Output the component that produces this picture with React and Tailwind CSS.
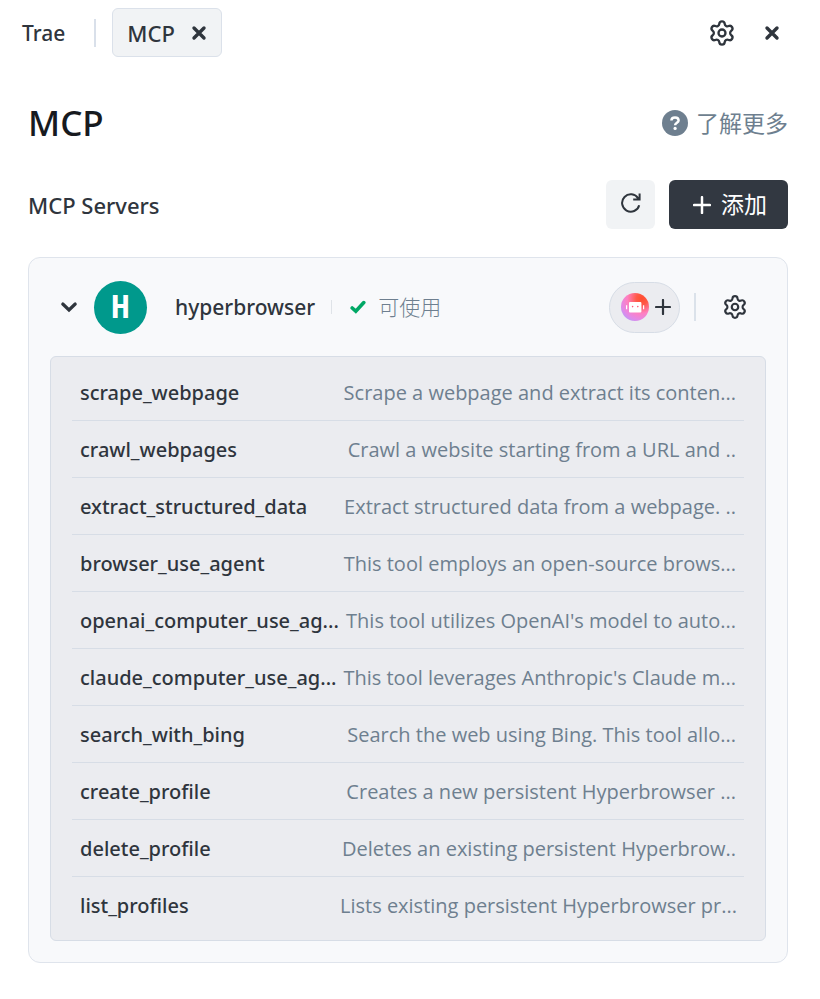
import React from "react";
import { Settings } from "lucide-react";

const tools = [
  ["scrape_webpage", "Scrape a webpage and extract its conten..."],
  ["crawl_webpages", "Crawl a website starting from a URL and .."],
  ["extract_structured_data", "Extract structured data from a webpage. .."],
  ["browser_use_agent", "This tool employs an open-source brows..."],
  ["openai_computer_use_ag...", "This tool utilizes OpenAI's model to auto..."],
  ["claude_computer_use_ag...", "This tool leverages Anthropic's Claude m..."],
  ["search_with_bing", "Search the web using Bing. This tool allo..."],
  ["create_profile", "Creates a new persistent Hyperbrowser ..."],
  ["delete_profile", "Deletes an existing persistent Hyperbrow.."],
  ["list_profiles", "Lists existing persistent Hyperbrowser pr..."],
];

function Cross() {
  return (
    <svg viewBox="0 0 16 16" className="size-4" fill="none" stroke="currentColor" strokeWidth="3.4" strokeLinecap="round">
      <path d="M3 3 13 13M13 3 3 13" />
    </svg>
  );
}

function Plus({ className }) {
  return (
    <svg viewBox="0 0 16 16" className={className} fill="none" stroke="currentColor" strokeWidth="2.2" strokeLinecap="round">
      <path d="M8 1v14M1 8h14" />
    </svg>
  );
}

function Refresh() {
  return (
    <svg viewBox="0 0 20 20" className="mb-1 size-5" fill="none" stroke="currentColor" strokeWidth="2">
      <path d="M18.2 12.2A8.7 8.7 0 1 1 17.2 5.4" />
      <path d="M18.6 0.6v6h-6.4" />
      <path d="M18.6 3v3.6h-3.8z" fill="currentColor" stroke="none" />
    </svg>
  );
}

function Bot() {
  return (
    <svg viewBox="0 0 28 28" className="size-7" aria-hidden="true">
      <defs>
        <radialGradient id="botFill" cx="0.75" cy="0.2" r="0.95">
          <stop offset="0" stopColor="#ff4d2e" />
          <stop offset="0.22" stopColor="#ff5a48" />
          <stop offset="0.55" stopColor="#ff80c0" />
          <stop offset="0.8" stopColor="#e488e6" />
          <stop offset="1" stopColor="#b69bfa" />
        </radialGradient>
      </defs>
      <circle cx="14" cy="14" r="14" fill="url(#botFill)" />
      <rect x="8" y="9" width="12.4" height="10.4" rx="1" fill="#fff" />
      <path d="M5.6 12.2v4M22.6 12.2v4" stroke="#fff" strokeWidth="1.2" />
      <circle cx="11.6" cy="13.6" r="0.8" fill="#ff5b78" />
      <circle cx="16.8" cy="13.6" r="0.8" fill="#ff5b78" />
    </svg>
  );
}

export default function App() {
  return (
    <div className="min-h-screen bg-white font-['Noto_Sans','Noto_Sans_CJK_SC',sans-serif] text-[#2f353d]">
      <header className="flex items-center justify-between pt-2 pr-10 pl-[22px]">
        <div className="flex items-center">
          <span className="text-[21px] leading-7 font-medium">Trae</span>
          <span className="mr-4 ml-[29px] h-7 w-0.5 bg-[#d9e0ea]" />
          <div className="flex h-[49px] items-center gap-4 rounded-md border border-[#dbe1ea] bg-[#f1f3f5] px-[14px]">
            <span className="text-[22px] leading-7 font-medium">MCP</span>
            <button type="button" aria-label="Close tab">
              <Cross />
            </button>
          </div>
        </div>
        <div className="flex items-center gap-7">
          <button type="button" aria-label="Settings">
            <Settings className="size-7" strokeWidth={2} />
          </button>
          <button type="button" aria-label="Close panel">
            <Cross />
          </button>
        </div>
      </header>

      <main className="pt-12 pr-8 pb-9 pl-7">
        <div className="flex items-center justify-between">
          <h1 className="text-[35px] leading-9 font-medium text-[#171a1f]">MCP</h1>
          <a href="#learn" className="flex items-center gap-2 text-[23px] leading-8 text-[#6e7f8f]">
            <svg viewBox="0 0 26 26" className="size-[26px]" fill="none">
              <circle cx="13" cy="13" r="13" fill="#6e7f8f" />
              <path d="M9.4 10.6C9.4 8.6 10.9 7.4 13 7.4s3.6 1.2 3.6 3c0 2.2-3.5 2.4-3.5 4.8" stroke="#fff" strokeWidth="2.5" />
              <circle cx="13.1" cy="18.4" r="1.6" fill="#fff" />
            </svg>
            了解更多
          </a>
        </div>

        <div className="mt-[39px] flex items-center justify-between">
          <h2 className="text-[22px] leading-7 font-medium">MCP Servers</h2>
          <div className="flex gap-3.5">
            <button type="button" aria-label="Refresh" className="flex size-[49px] items-center justify-center rounded-md bg-[#f1f3f5]">
              <Refresh />
            </button>
            <button type="button" className="flex h-[49px] items-center gap-2.5 rounded-md bg-[#323841] pr-[21px] pl-6 text-[23px] text-white">
              <Plus className="size-[18px]" />
              添加
            </button>
          </div>
        </div>

        <section className="mt-7 rounded-xl border border-[#dfe4ec] bg-[#f8f9fb] px-[21px] pb-[21px]">
          <div className="flex h-[98px] items-center justify-between">
            <div className="flex items-center">
              <button type="button" aria-label="Collapse hyperbrowser" className="ml-2.5">
                <svg viewBox="0 0 18 18" className="size-[18px]" fill="none" stroke="currentColor" strokeWidth="3.2" strokeLinecap="round">
                  <path d="M2.8 6 9 12l6.2-6" />
                </svg>
              </button>
              <span className="ml-4 flex size-[53px] items-center justify-center rounded-full bg-[#00998c] font-['DejaVu_Sans_Mono',monospace] text-[32px] leading-8 font-bold text-white">
                H
              </span>
              <span className="ml-7 text-[21px] leading-7 font-medium">hyperbrowser</span>
              <span className="ml-4 h-3.5 w-px bg-[#dfe3e8]" />
              <svg viewBox="0 0 16 14" className="ml-[18px] h-3.5 w-4" fill="none" stroke="#00a865" strokeWidth="3.6" strokeLinecap="round">
                <path d="M2.2 8 5.8 11.2 13.8 2.6" />
              </svg>
              <span className="ml-3 text-[21px] leading-7 font-light text-[#6e7f8f]">可使用</span>
            </div>
            <div className="flex items-center">
              <button type="button" aria-label="Add to agent" className="flex h-[51px] w-[71px] items-center justify-center gap-1.5 rounded-full border border-[#d7dde6] bg-[#ebecf0] pl-[3px]">
                <Bot />
                <Plus className="size-4" />
              </button>
              <span className="ml-3.5 h-7 w-0.5 bg-[#dbe2ea]" />
              <button type="button" aria-label="Server settings" className="mr-[18px] ml-[26px]">
                <Settings className="size-[26px]" strokeWidth={2} />
              </button>
            </div>
          </div>

          <div className="rounded-md border border-[#d7dde6] bg-[#ebecf0] px-[21px] py-[7px]">
            <table className="w-full table-fixed border-separate border-spacing-0">
              <tbody>
                {tools.map(([name, description]) => (
                  <tr key={name} className="group text-[20px] leading-7 whitespace-nowrap">
                    <th scope="row" className="h-[57px] w-[268px] border-b border-[#d7dde6] p-0 pt-0.5 pl-2 text-left font-medium group-last:h-14 group-last:border-b-0">
                      {name}
                    </th>
                    <td className="h-[57px] border-b border-[#d7dde6] p-0 pt-0.5 pr-2 text-right font-['Open_Sans',sans-serif] text-[#6e7f8f] group-last:h-14 group-last:border-b-0">
                      {description}
                    </td>
                  </tr>
                ))}
              </tbody>
            </table>
          </div>
        </section>
      </main>
    </div>
  );
}
